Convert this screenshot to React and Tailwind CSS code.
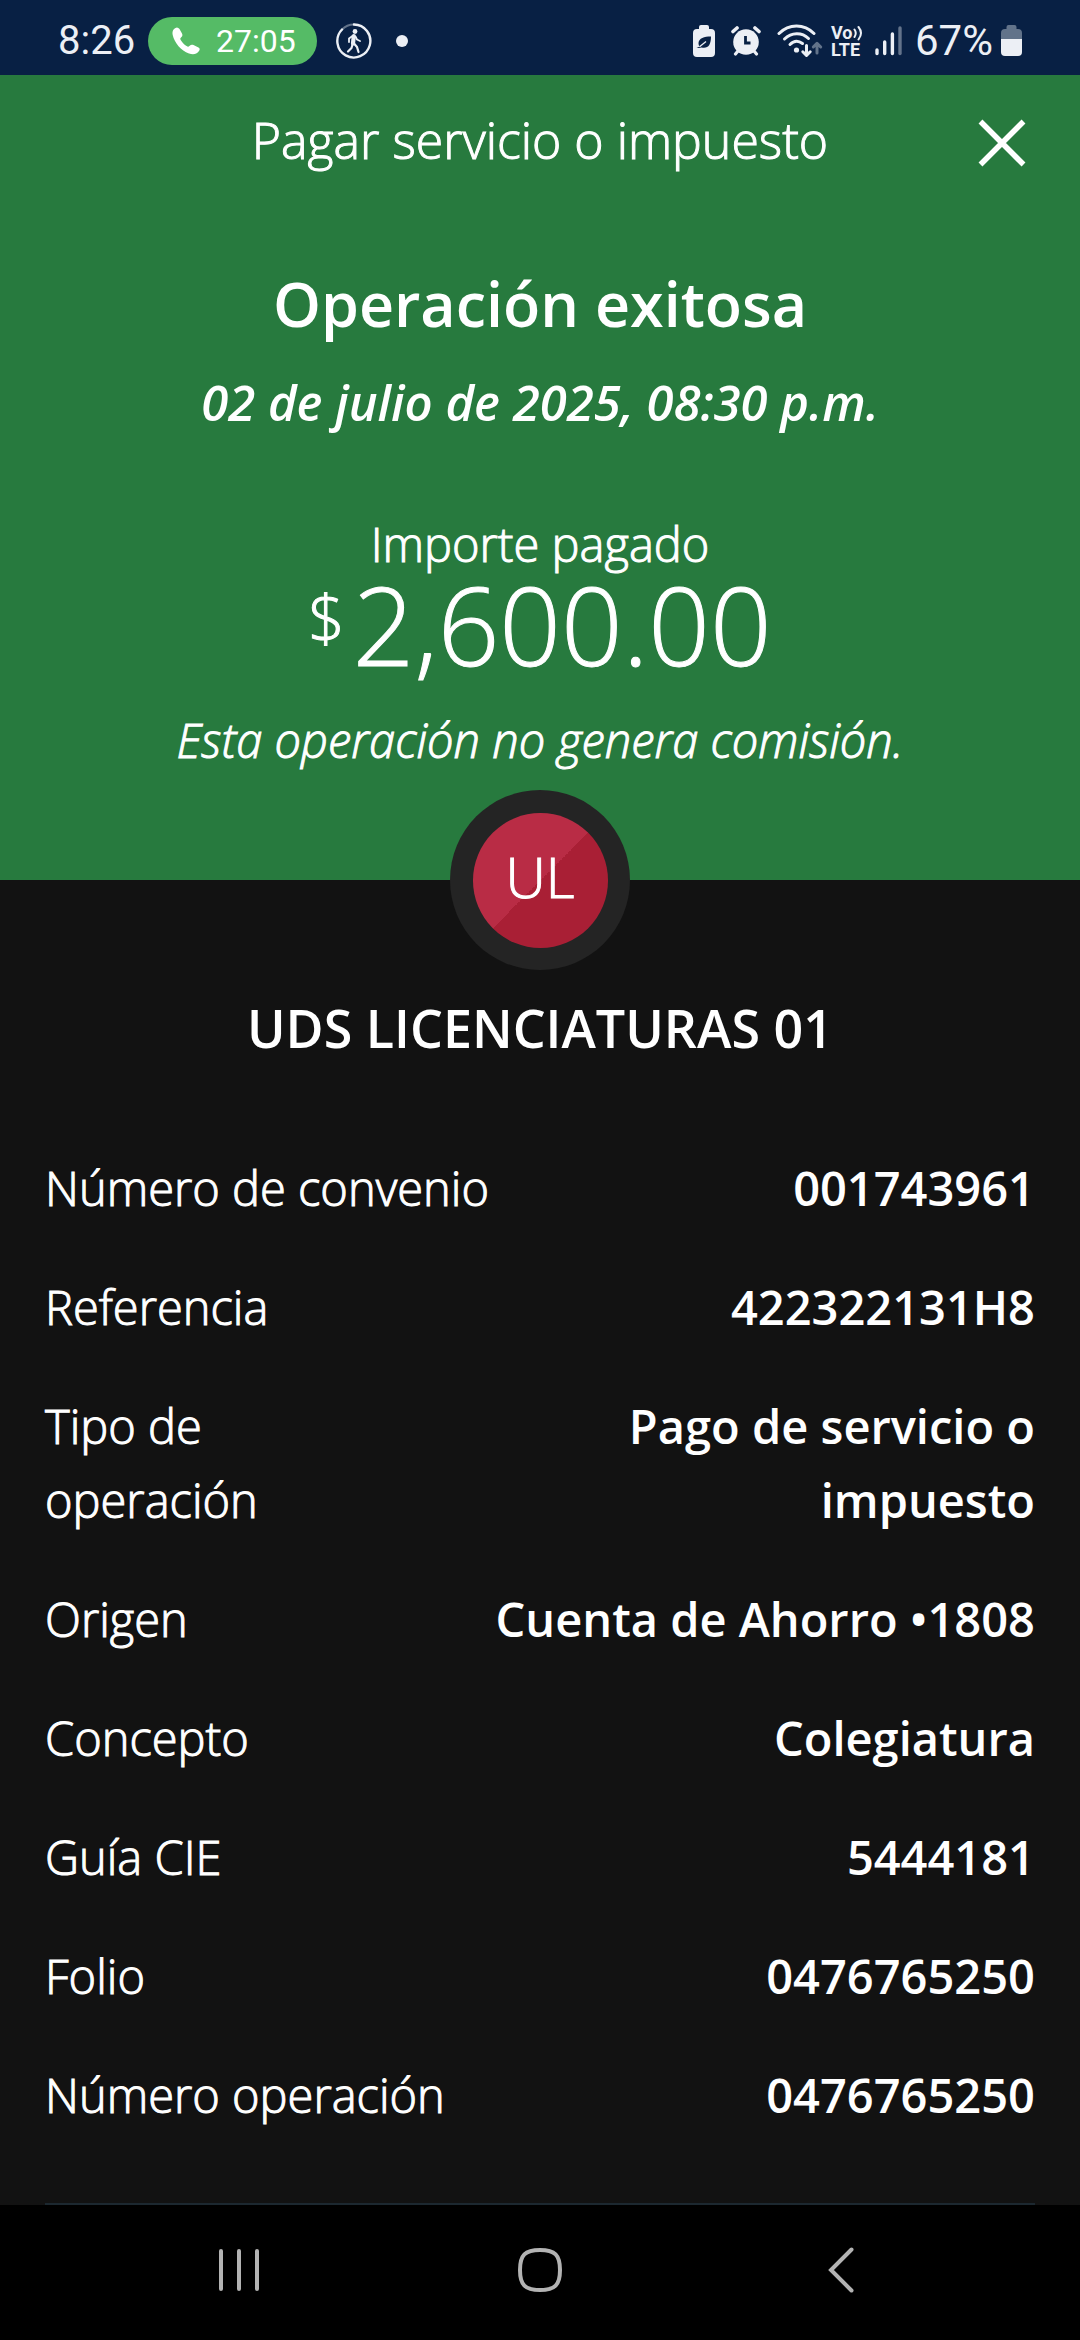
const DETAILS = [
  { label: 'Número de convenio', value: '001743961' },
  { label: 'Referencia', value: '422322131H8' },
  { label: 'Tipo de operación', value: 'Pago de servicio o impuesto', narrow: true },
  { label: 'Origen', value: 'Cuenta de Ahorro •1808' },
  { label: 'Concepto', value: 'Colegiatura' },
  { label: 'Guía CIE', value: '5444181' },
  { label: 'Folio', value: '0476765250' },
  { label: 'Número operación', value: '0476765250' },
]

// light weight, slightly thickened so it stays readable on dark backgrounds
const LIGHT = 'font-light [-webkit-text-stroke:1px]'

function PhoneIcon() {
  return (
    <svg width="28" height="28" viewBox="0 0 28 28" fill="#fff" aria-hidden="true">
      <path d="M2 2C4 0 6 0 7.500 2L10 6.500C11 8.500 10 9.500 9 10.500C8 11.500 8 12 9 13.500C11 16.500 13 18.500 15.500 19.500C16.500 20 17 19.500 18 18.500C19 17.500 20 17.500 21.500 18L26.500 20.500C28 21.500 28 22.500 27 24C24.500 27.500 21 28 17 26.500C9 23.500 2.500 16 .7 8C.2 5.500 .5 3.500 2 2Z" />
    </svg>
  )
}

function WalkIcon() {
  return (
    <svg width="36" height="36" viewBox="0 0 36 36" fill="none" stroke="#eceff5" strokeLinecap="round" strokeLinejoin="round" aria-hidden="true">
      <path d="M18 1.500A16.500 16.500 0 1 1 6 6.500" strokeWidth="2.400" />
      <path d="M6 6.500A16.500 16.500 0 0 1 18 1.500" strokeWidth="2" opacity=".4" />
      <circle cx="19" cy="8.500" r="2.400" fill="#eceff5" stroke="none" />
      <path d="M17.800 13L17 20.500" strokeWidth="4.200" />
      <path d="M16.500 13L13 15.500V19M19.500 13.500L21 16.500L24 18" strokeWidth="1.800" />
      <path d="M18 20.500L21 24L22.500 29M16.500 21.500L15.500 25L12 28.500" strokeWidth="2.200" />
    </svg>
  )
}

function EcoBatteryIcon() {
  return (
    <svg width="22" height="32" viewBox="0 0 22 32" aria-hidden="true">
      <path d="M6 4V2Q6 0 8 0H14Q16 0 16 2V4H18Q22 4 22 8V28Q22 32 18 32H4Q0 32 0 28V8Q0 4 4 4Z" fill="#eceff5" />
      <path d="M18 11.500C11 11.500 6 13 5.500 18C5.500 20 6 21 6.800 21.500L3.500 23H6L8.500 22.500C15 24 18 20 18 11.500Z" fill="#082044" />
      <path d="M6.500 21.800L13 16.500" stroke="#eceff5" strokeWidth="1.300" />
    </svg>
  )
}

function AlarmIcon() {
  return (
    <svg width="30" height="30" viewBox="0 0 30 30" fill="none" stroke="#eceff5" strokeLinecap="round" aria-hidden="true">
      <circle cx="15" cy="16" r="12.800" fill="#eceff5" stroke="none" />
      <path d="M2 5.500L6 2M28 5.500L24 2" strokeWidth="3.600" />
      <path d="M7 25L4.500 28M23 25L25.500 28" strokeWidth="3.200" />
      <path d="M14.500 10V17H19.500" stroke="#082044" strokeWidth="2.800" strokeLinecap="butt" />
    </svg>
  )
}

function WifiIcon() {
  return (
    <svg width="46" height="34" viewBox="0 0 46 34" fill="none" stroke="#eceff5" strokeWidth="3" strokeLinecap="round" strokeLinejoin="round" aria-hidden="true">
      <path d="M2 9.500C12-.5 27-.5 37 9.500" />
      <path d="M7.500 15C14.500 8 25 8 31.500 14.500" />
      <path d="M13 20.500C17 16.500 21.500 16.500 25.500 19.500" />
      <circle cx="19.500" cy="26" r="2.600" fill="#eceff5" stroke="none" />
      <path d="M29.500 21.500V31M25.800 27.800L29.500 31.500L33.200 27.800" />
      <path d="M40 29V20M36.300 23L40 19.300L43.700 23" opacity=".4" />
    </svg>
  )
}

function SignalIcon() {
  return (
    <svg width="28" height="30" viewBox="0 0 28 30" stroke="#eceff5" strokeWidth="3.400" strokeLinecap="round" aria-hidden="true">
      <path d="M2 24V27.500M9.700 16V27.500M17.400 8V27.500" />
      <path d="M25 2V27.500" opacity=".4" />
    </svg>
  )
}

function BatteryIcon() {
  return (
    <svg width="21" height="32" viewBox="0 0 21 32" fill="#eceff5" aria-hidden="true">
      <path d="M0 14V8Q0 4 4 4H5.500V2Q5.500 0 7.500 0H13.500Q15.500 0 15.500 2V4H17Q21 4 21 8V14Z" opacity=".4" />
      <path d="M0 14H21V27Q21 31 17 31H4Q0 31 0 27Z" />
    </svg>
  )
}

function StatusBar() {
  return (
    <div className="flex h-[75px] items-center justify-between bg-[#082044] px-[58px] pt-[7px] font-[Roboto,sans-serif] text-[#eceff5]">
      <div className="flex items-center">
        <span className="w-[90px] text-[40px] leading-[48px]">8:26</span>
        <div className="flex h-12 w-[169px] items-center gap-4 rounded-full bg-[#55bb66] pl-6 text-[32px] leading-[48px] text-white">
          <PhoneIcon />
          <span>27:05</span>
        </div>
        <div className="ml-[19px] flex items-center gap-6">
          <WalkIcon />
          <span className="size-3 rounded-full bg-[#eceff5]" />
        </div>
      </div>
      <div className="flex items-center">
        <div className="mr-4 flex items-center gap-4">
          <EcoBatteryIcon />
          <AlarmIcon />
          <WifiIcon />
        </div>
        <div className="mr-3 -ml-2 flex w-8 flex-col text-[18px] leading-[17px] font-bold">
          <span className="flex items-center">
            Vo
            <svg width="10" height="16" viewBox="0 0 10 16" fill="none" stroke="#eceff5" strokeWidth="2" strokeLinecap="round" aria-hidden="true">
              <path d="M1.500 4.500Q4 8 1.500 12M5.500 2Q10.500 8 5.500 14.500" />
            </svg>
          </span>
          <span>LTE</span>
        </div>
        <SignalIcon />
        <span className="mr-2 ml-3 text-[42px] leading-[48px]">67%</span>
        <BatteryIcon />
      </div>
    </div>
  )
}

function Summary() {
  return (
    <header className="bg-[#277a3e] pb-[104px] text-center text-[47px] leading-[72px]">
      <div className="grid h-[136px] grid-cols-[1fr_auto_1fr] items-start">
        <h1 className={`col-start-2 text-[50px] leading-[130px] ${LIGHT}`}>Pagar servicio o impuesto</h1>
        <button type="button" aria-label="Cerrar" className="mr-[54px] flex h-full items-center justify-self-end">
          <svg width="48" height="48" viewBox="0 0 48 48" stroke="#fff" strokeWidth="5.500" aria-hidden="true">
            <path d="M2.500 2.500L45.500 45.500M45.500 2.500L2.500 45.500" />
          </svg>
        </button>
      </div>
      <h2 className="mt-[53px] text-[61px] leading-20 font-semibold">Operación exitosa</h2>
      <p className="mt-[22px] text-[49px] font-semibold italic">02 de julio de 2025, 08:30 p.m.</p>
      <p className={`mt-[70px] ${LIGHT}`}>Importe pagado</p>
      <p className={`flex justify-center gap-2 ${LIGHT}`}>
        <span className="text-[64px] leading-[76px]">$</span>
        <span className="text-[108px] leading-[90px]">2,600.00</span>
      </p>
      <p className={`mt-[34px] italic ${LIGHT}`}>Esta operación no genera comisión.</p>
    </header>
  )
}

function DetailRow({ label, value, narrow }) {
  return (
    <div className="flex justify-between">
      <dt className={narrow ? `w-1/4 ${LIGHT}` : LIGHT}>{label}</dt>
      <dd className={narrow ? 'w-[45%] text-right font-semibold' : 'text-right font-semibold'}>{value}</dd>
    </div>
  )
}

function NavBar() {
  return (
    <nav className="grid h-[135px] grid-cols-3 bg-black px-[88px] pb-1.5">
      <button type="button" aria-label="Recientes" className="flex items-center justify-center">
        <svg width="40" height="44" viewBox="0 0 40 44" stroke="#b3b3b3" strokeWidth="4" strokeLinecap="round" aria-hidden="true">
          <path d="M2 3V41M20 3V41M38 3V41" />
        </svg>
      </button>
      <button type="button" aria-label="Inicio" className="flex items-center justify-center">
        <svg width="44" height="44" viewBox="0 0 44 44" fill="none" stroke="#b3b3b3" strokeWidth="4" aria-hidden="true">
          <path d="M22 2C37 2 42 7 42 22S37 42 22 42S2 37 2 22S7 2 22 2Z" />
        </svg>
      </button>
      <button type="button" aria-label="Atrás" className="flex items-center justify-center">
        <svg width="26" height="46" viewBox="0 0 26 46" fill="none" stroke="#b3b3b3" strokeWidth="4" strokeLinecap="round" aria-hidden="true">
          <path d="M23.500 2.500L3 23L23.500 43.500" />
        </svg>
      </button>
    </nav>
  )
}

export default function App() {
  return (
    <div className="flex min-h-screen flex-col bg-[#121212] font-['Open_Sans',sans-serif] text-white">
      <StatusBar />
      <Summary />
      <main className="flex-1 px-[45px]">
        <div className="mx-auto -mt-[90px] flex size-[180px] items-center justify-center rounded-full bg-[#242424]">
          <div className={`flex size-[135px] items-center justify-center rounded-full bg-[linear-gradient(135deg,#b92c45_50%,#a91f35_50%)] pb-2 text-[56px] leading-[72px] ${LIGHT}`}>
            UL
          </div>
        </div>
        <h3 className="mt-[18px] text-center text-[52px] leading-20 font-semibold">UDS LICENCIATURAS 01</h3>
        <dl className="mt-[83px] flex flex-col gap-[45px] border-b-2 border-[#1c2830] pb-[71px] text-[47px] leading-[74px]">
          {DETAILS.map((item) => (
            <DetailRow key={item.label} {...item} />
          ))}
        </dl>
      </main>
      <NavBar />
    </div>
  )
}
